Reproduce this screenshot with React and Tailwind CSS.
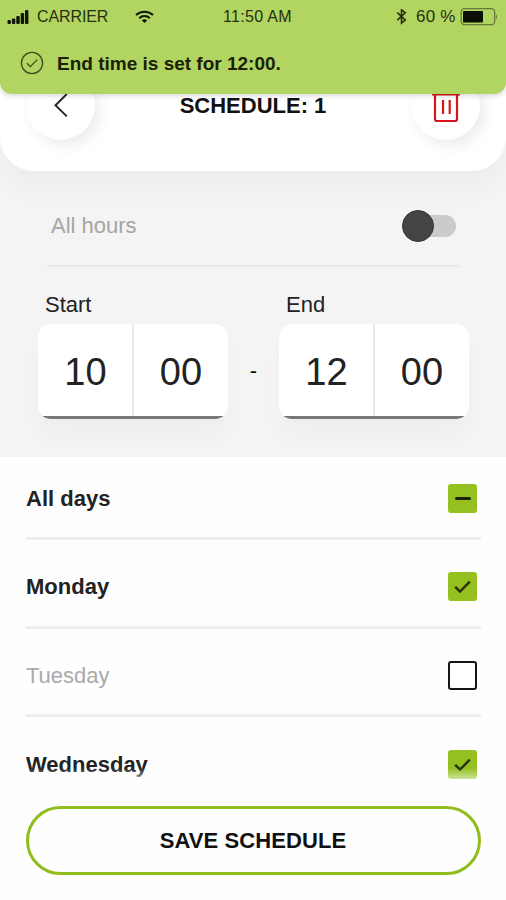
import { useState } from "react";

const WEEK = ["Monday", "Tuesday", "Wednesday"];

export default function App() {
  const [allHours, setAllHours] = useState(false);
  const [days, setDays] = useState({
    Monday: true,
    Tuesday: false,
    Wednesday: true,
  });

  const picked = WEEK.filter((d) => days[d]).length;
  const allState =
    picked === 0 ? "off" : picked === WEEK.length ? "on" : "mixed";

  function toggleAll() {
    const next = allState !== "on";
    setDays({ Monday: next, Tuesday: next, Wednesday: next });
  }

  return (
    <div className="relative flex h-[900px] w-full flex-col overflow-hidden bg-[#fefefe] font-['Liberation_Sans',Arial,sans-serif] text-[22px] text-[#222]">
      <Toast text="End time is set for 12:00." />

      <section className="h-[457px] shrink-0 bg-[#f4f4f4]">
        <header className="flex h-[171px] items-end justify-between rounded-b-[34px] bg-white px-[26px] pb-[31px] shadow-[0_18px_28px_rgba(0,0,0,0.03)]">
          <RoundButton label="Back">
            <BackIcon />
          </RoundButton>
          <h1 className="mb-[22px] leading-[25px] font-bold text-[#111]">
            SCHEDULE: 1
          </h1>
          <RoundButton label="Delete">
            <TrashIcon />
          </RoundButton>
        </header>

        <div className="mx-[47px] flex h-[96px] items-center justify-between border-b-2 border-[#e8e8e8] pt-[15px] pr-[3px] pl-1">
          <span className="text-[#a5a5a5]">All hours</span>
          <button
            type="button"
            role="switch"
            aria-checked={allHours}
            aria-label="All hours"
            onClick={() => setAllHours(!allHours)}
            className={`flex h-8 w-[54px] items-center ${allHours ? "flex-row-reverse" : ""}`}
          >
            <span className="z-10 size-8 shrink-0 rounded-full border border-[#333] bg-[#444]" />
            <span
              className={`h-[22px] w-[38px] shrink-0 bg-[#cbcbcb] ${
                allHours ? "-mr-4 rounded-l-full" : "-ml-4 rounded-r-full"
              }`}
            />
          </button>
        </div>

        <div className="flex justify-between pt-[25px] pr-[37px] pl-[38px]">
          <TimeField label="Start" hours="10" minutes="00" />
          <span className="mt-[66px] leading-[25px] text-[#111]">-</span>
          <TimeField label="End" hours="12" minutes="00" />
        </div>
      </section>

      <div className="relative mr-[25px] ml-[26px] h-[349px] shrink-0 overflow-hidden">
        <ul className="divide-y-[3px] divide-[#eee]">
          <DayRow label="All days" state={allState} onToggle={toggleAll} first />
          {WEEK.map((d) => (
            <DayRow
              key={d}
              label={d}
              state={days[d] ? "on" : "off"}
              onToggle={() => setDays({ ...days, [d]: !days[d] })}
            />
          ))}
        </ul>
        {/* rows fade out above the save button */}
        <div className="pointer-events-none absolute inset-x-0 bottom-[26px] h-[12px] bg-linear-to-b from-transparent to-[#fefefe]/60" />
      </div>

      <button
        type="button"
        className="mr-[25px] ml-[26px] h-[69px] shrink-0 rounded-full border-[3px] border-[#90bd1b] bg-[#fefefe] pr-px font-bold tracking-[0.1px] text-[#111]"
      >
        SAVE SCHEDULE
      </button>
    </div>
  );
}

// success message that slides over the header, status bar included
function Toast({ text }) {
  return (
    <div className="absolute inset-x-0 top-0 z-20 h-[94px] rounded-b-[12px] bg-[#b2d562] shadow-[0_2px_5px_rgba(0,0,0,0.15)]">
      <div className="flex h-[34px] items-center pl-[7px] text-[16px] text-[#26300f]">
        <SignalIcon />
        <span className="ml-[8px] w-[98px] tracking-[-0.1px]">CARRIER</span>
        <WifiIcon />
        <span className="ml-[69px] w-[173px] tracking-[0.3px]">11:50 AM</span>
        <BluetoothIcon />
        <span className="ml-[9px] w-[44px] text-[17px] tracking-[0.2px] whitespace-nowrap">
          60 %
        </span>
        <BatteryIcon />
      </div>
      <div className="flex h-[58px] items-center pl-[20px]">
        <svg
          width="24"
          height="24"
          viewBox="0 0 24 24"
          fill="none"
          stroke="#3c4a1c"
          strokeWidth="1.3"
        >
          <circle cx="12" cy="12" r="10.6" />
          <path d="m7 12.3 3.3 3.3 6.9-7" />
        </svg>
        <span className="mt-[2px] ml-[13px] text-[19px] font-bold text-[#1a2108]">{text}</span>
      </div>
    </div>
  );
}

function RoundButton({ label, children }) {
  return (
    <button
      type="button"
      aria-label={label}
      className="flex size-[69px] items-center justify-center rounded-full bg-white shadow-[5px_6px_14px_rgba(0,0,0,0.08)]"
    >
      {children}
    </button>
  );
}

function TimeField({ label, hours, minutes }) {
  return (
    <div>
      <div className="pl-[7px] leading-[25px]">{label}</div>
      <div className="mt-[7px] flex h-[95px] w-[190px] flex-col overflow-hidden rounded-[13px] bg-white text-[38px] shadow-[0_18px_20px_rgba(0,0,0,0.025)]">
        <div className="flex flex-1">
          <span className="flex w-24 items-center justify-center border-r-2 border-[#e9e9e9] pt-[5px] pl-px">
            {hours}
          </span>
          <span className="flex flex-1 items-center justify-center pt-[5px]">{minutes}</span>
        </div>
        <div className="h-[3px] bg-[#777]" />
      </div>
    </div>
  );
}

function DayRow({ label, state, onToggle, first }) {
  return (
    <li
      className={`flex items-center justify-between pr-1 ${
        first ? "h-[83px] pt-[2px]" : "h-[88.7px] pt-[8px] last:pb-[3px]"
      }`}
    >
      <span className={state === "off" ? "text-[#a9a9a9]" : "font-bold"}>{label}</span>
      <button
        type="button"
        role="checkbox"
        aria-checked={state === "mixed" ? "mixed" : state === "on"}
        aria-label={label}
        onClick={onToggle}
        className={`flex size-[29px] items-center justify-center rounded-[3px] ${
          state === "off" ? "border-2 border-[#161616] bg-white" : "bg-[#94c11f]"
        }`}
      >
        {state === "on" && (
          <svg width="29" height="29" viewBox="0 0 29 29" fill="none" stroke="#26300f" strokeWidth="2.4">
            <path d="m7.2 14.8 4.8 4.7L21.8 9.7" />
          </svg>
        )}
        {state === "mixed" && <span className="h-[3px] w-4 rounded-sm bg-[#1b230a]" />}
      </button>
    </li>
  );
}

function BackIcon() {
  return (
    <svg width="24" height="24" viewBox="0 0 24 24" fill="none" stroke="#2b2b2b" strokeWidth="2">
      <path d="M17.8 0 6.5 11.2 17.8 22.4" />
    </svg>
  );
}

function TrashIcon() {
  return (
    <svg width="30" height="36" viewBox="0 0 30 36" fill="none" stroke="#d5161b" strokeWidth="2.2">
      <path d="M1 6.4h28M10 6V2h10v4" />
      <path d="M4 6v25a2 2 0 0 0 2 2h18a2 2 0 0 0 2-2V6M12 12v14M18.7 12v14" />
    </svg>
  );
}

function SignalIcon() {
  return (
    <svg width="22" height="16" viewBox="0 0 22 16" fill="#111605">
      <rect x="0.5" y="11" width="3.4" height="4" rx="1" />
      <rect x="4.9" y="9.5" width="3.4" height="5.5" rx="1" />
      <rect x="9.3" y="7" width="3.4" height="8" rx="1" />
      <rect x="13.7" y="4" width="3.4" height="11" rx="1" />
      <rect x="18" y="1" width="3.4" height="14" rx="1" />
    </svg>
  );
}

function WifiIcon() {
  return (
    <svg width="19" height="14" viewBox="0 0 19 14" fill="none" stroke="#111605" strokeWidth="2">
      <path d="M1 5a12.4 12.4 0 0 1 17 0M4.2 8.2a7.8 7.8 0 0 1 10.6 0" />
      <path d="M9.5 13 6.8 10.4a4 4 0 0 1 5.4 0Z" fill="#111605" stroke="none" />
    </svg>
  );
}

function BluetoothIcon() {
  return (
    <svg width="11" height="16" viewBox="0 0 11 16" fill="none" stroke="#26300f" strokeWidth="1.6">
      <path d="m1.3 3.6 8 7.3L5.5 14V.8l3.8 3.1-8 7.3" />
    </svg>
  );
}

function BatteryIcon() {
  return (
    <svg width="38" height="18" viewBox="0 0 38 18" fill="none">
      <rect x="1.2" y="0.7" width="33.5" height="16" rx="3.5" stroke="#66783a" strokeWidth="1.3" />
      <rect x="3" y="3" width="20" height="11.5" rx="1" fill="#0b0e03" />
      <path d="M36 6v5.5q2-2.7 0-5.5Z" fill="#66783a" />
    </svg>
  );
}
